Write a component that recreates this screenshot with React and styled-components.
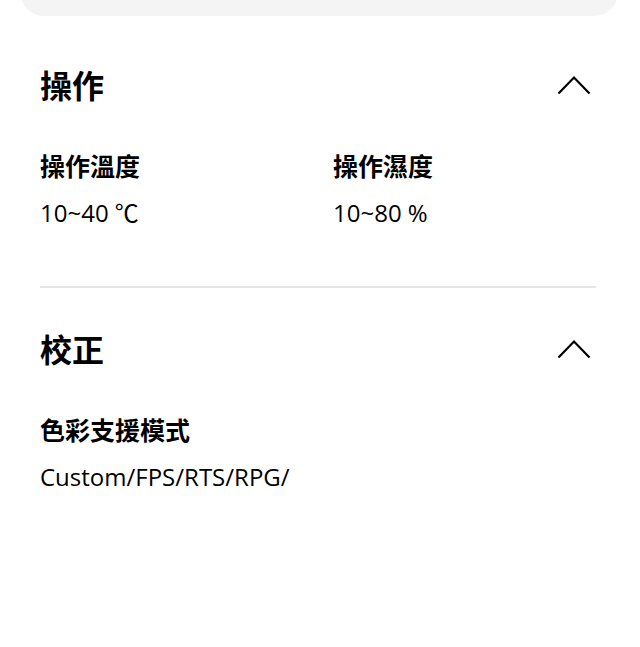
import React from 'react';
import styled, { createGlobalStyle } from 'styled-components';

const GlobalStyle = createGlobalStyle`
  html, body {
    margin: 0;
    padding: 0;
    background: #fff;
  }
  body {
    font-family: "Open Sans", "Noto Sans CJK TC", sans-serif;
    color: #000;
    overflow: hidden;
  }
`;

const Page = styled.div`
  width: 640px;
  height: 647px;
  overflow: hidden;
`;

// 위쪽 회색 카드 (잘려 있음)
const TopCard = styled.div`
  height: 40px;
  margin: -24px 22px 0 20px;
  background: #f4f4f4;
  border-radius: 0 0 24px 24px;
`;

const Content = styled.div`
  padding: 0 44px 0 40px;
`;

const Section = styled.section`
  padding-top: ${(p) => p.$top}px;
  padding-bottom: ${(p) => p.$bottom}px;
  border-bottom: ${(p) => (p.$divider ? '2px solid #e6e6e6' : 'none')};
`;

const Header = styled.div`
  display: flex;
  align-items: center;
  justify-content: space-between;
  height: 40px;
`;

const Title = styled.h2`
  margin: 0;
  font-size: 32px;
  line-height: 40px;
  font-weight: 700;
  font-family: "Noto Sans CJK TC", sans-serif;
`;

const Chevron = styled.svg`
  width: 34px;
  height: 20px;
  margin-right: 5px;
  margin-top: 2px;
`;

const Specs = styled.div`
  display: grid;
  grid-template-columns: 293px 1fr;
  margin-top: 45px;
`;

const Spec = styled.div`
  display: flex;
  flex-direction: column;
  gap: 16px;
`;

const Label = styled.div`
  font-size: 25px;
  line-height: 32px;
  font-weight: 700;
  font-family: "Noto Sans CJK TC", sans-serif;
`;

const Value = styled.div`
  font-size: 24px;
  line-height: 32px;
  font-weight: 400;
`;

function Up() {
  return (
    <Chevron viewBox="0 0 34 20">
      <polyline points="1.5,18.5 17,2.5 32.5,18.5" fill="none" stroke="#000" strokeWidth="2.2" />
    </Chevron>
  );
}

export default function App() {
  return (
    <Page>
      <GlobalStyle />
      <TopCard />
      <Content>
        <Section $top={48} $bottom={57} $divider>
          <Header>
            <Title>操作</Title>
            <Up />
          </Header>
          <Specs>
            <Spec>
              <Label>操作溫度</Label>
              <Value>10~40 ℃</Value>
            </Spec>
            <Spec>
              <Label>操作濕度</Label>
              <Value>10~80 %</Value>
            </Spec>
          </Specs>
        </Section>

        <Section $top={40} $bottom={0}>
          <Header>
            <Title>校正</Title>
            <Up />
          </Header>
          <Specs>
            <Spec>
              <Label>色彩支援模式</Label>
              <Value>Custom/FPS/RTS/RPG/</Value>
            </Spec>
          </Specs>
        </Section>
      </Content>
    </Page>
  );
}
